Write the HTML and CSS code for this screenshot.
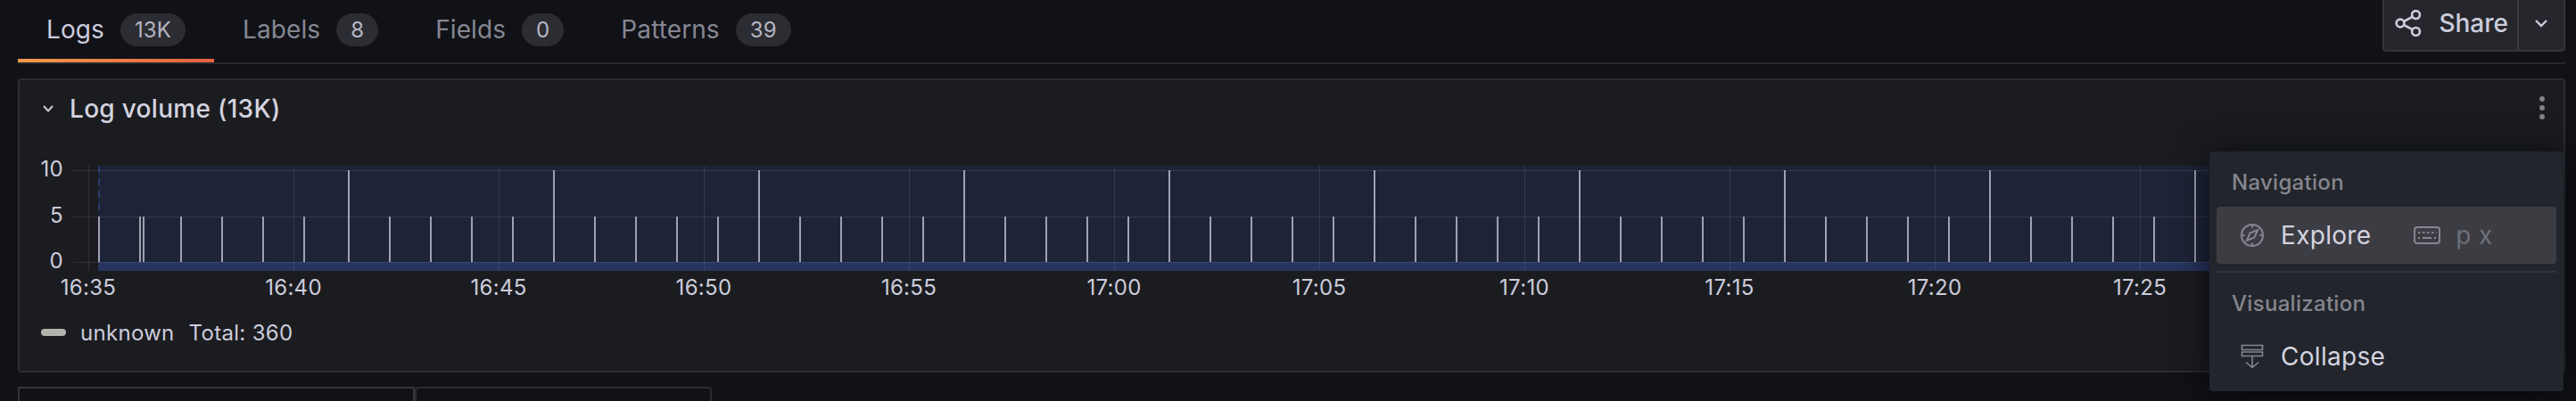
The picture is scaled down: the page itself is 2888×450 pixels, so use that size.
FILE: index.html
```html
<!DOCTYPE html>
<html lang="en">
<head>
  <meta charset="UTF-8" />
  <title>Logs</title>
  <link rel="stylesheet" href="styles.css">
</head>
<body>
  <div class="tabs">
    <div class="tab active">Logs <span class="badge">13K</span></div>
    <div class="tab">Labels <span class="badge">8</span></div>
    <div class="tab">Fields <span class="badge">0</span></div>
    <div class="tab">Patterns <span class="badge">39</span></div>
    <div class="share">
      <div class="share-main">
        <svg class="share-icon" viewBox="0 0 30 30">
          <circle cx="6" cy="15" r="4.4" />
          <circle cx="23.5" cy="5.6" r="4.4" />
          <circle cx="23.5" cy="24.4" r="4.4" />
          <path d="M10 13 19.6 7.8M10 17 19.6 22.2" />
        </svg>
        <span>Share</span>
      </div>
      <div class="share-more">
        <svg class="chevron-big" viewBox="0 0 16 10"><path d="M2 2 8 8 14 2" /></svg>
      </div>
    </div>
  </div>

  <div class="panel">
    <div class="panel-header">
      <svg class="chevron-small" viewBox="0 0 14 10"><path d="M2 2 7 7.5 12 2" /></svg>
      <span class="panel-title">Log volume (13K)</span>
      <svg class="dots" viewBox="0 0 8 30">
        <circle cx="4" cy="4" r="2.9" />
        <circle cx="4" cy="14" r="2.9" />
        <circle cx="4" cy="24" r="2.9" />
      </svg>
    </div>

    <svg class="chart" viewBox="22 154 2852 186">
      <rect class="plot-bg" x="110" y="186" width="2750" height="118" />
      <rect class="plot-band" x="110" y="294" width="2750" height="10" />
      <path class="plot-start" d="M111 186V243" />
      <path class="grid" d="M82 191H2860M82 243H2860M82 294H2860" />
      <path class="grid" d="M99 186V303M329 186V303M559 186V303M789 186V303M1019 186V303M1249 186V303M1479 186V303M1709 186V303M1939 186V303M2169 186V303M2399 186V303M2629 186V303" />
      <path class="bars" d="M111 243V294M157 243V294M161 243V294M203 243V294M249 243V294M295 243V294M341 243V294
        M437 243V294M483 243V294M529 243V294M575 243V294M667 243V294M713 243V294M759 243V294M805 243V294
        M897 243V294M943 243V294M989 243V294M1035 243V294M1127 243V294M1173 243V294M1219 243V294M1265 243V294
        M1357 243V294M1403 243V294M1449 243V294M1495 243V294M1587 243V294M1633 243V294M1679 243V294M1725 243V294
        M1817 243V294M1863 243V294M1909 243V294M1955 243V294M2047 243V294M2093 243V294M2139 243V294M2185 243V294
        M2277 243V294M2323 243V294M2369 243V294M2415 243V294" />
      <path class="bars" d="M391 191V294M621 191V294M851 191V294M1081 191V294M1311 191V294M1541 191V294M1771 191V294M2001 191V294M2231 191V294M2461 191V294" />
      <text class="y-label" x="71" y="198">10</text>
      <text class="y-label" x="71" y="250">5</text>
      <text class="y-label" x="71" y="301">0</text>
      <text class="x-label" x="99" y="331">16:35</text>
      <text class="x-label" x="329" y="331">16:40</text>
      <text class="x-label" x="559" y="331">16:45</text>
      <text class="x-label" x="789" y="331">16:50</text>
      <text class="x-label" x="1019" y="331">16:55</text>
      <text class="x-label" x="1249" y="331">17:00</text>
      <text class="x-label" x="1479" y="331">17:05</text>
      <text class="x-label" x="1709" y="331">17:10</text>
      <text class="x-label" x="1939" y="331">17:15</text>
      <text class="x-label" x="2169" y="331">17:20</text>
      <text class="x-label" x="2399" y="331">17:25</text>
    </svg>

    <div class="legend">
      <span class="legend-swatch"></span>
      <span>unknown</span>
      <span>Total: 360</span>
    </div>
  </div>

  <div class="subtabs">
    <div class="subtab first"></div>
    <div class="subtab second"></div>
  </div>

  <div class="menu">
    <div class="menu-label">Navigation</div>
    <div class="menu-item focused">
      <svg class="menu-icon" viewBox="0 0 28 28">
        <circle cx="14" cy="14" r="12" />
        <path d="M14 2V5.5M14 22.5V26M2 14H5.5M22.5 14H26" />
        <path d="M20 8 16.5 16.5 8 20 11.5 11.5Z" />
      </svg>
      <span class="menu-text">Explore</span>
      <span class="shortcut">
        <svg class="key-icon" viewBox="0 0 30 20">
          <rect x="1" y="1" width="28" height="18" rx="3" />
          <path class="key-dots" d="M5 7H7.5M10 7H12.5M15 7H17.5M20 7H22.5M25 7H25.5M5 13H7M10 13H20M23 13H25" />
        </svg>
        <span>p x</span>
      </span>
    </div>
    <div class="menu-divider"></div>
    <div class="menu-label">Visualization</div>
    <div class="menu-item">
      <svg class="menu-icon" viewBox="0 0 28 28">
        <path class="collapse-lines" d="M2.5 1.5H25.5V6.5H2.5ZM2.5 9H25.5V13.5H2.5ZM14 13.5V26.5M7 20.5 14 26.5 21 20.5" />
      </svg>
      <span class="menu-text">Collapse</span>
    </div>
  </div>
</body>
</html>
```

FILE: styles.css
```css
* {
  box-sizing: border-box;
}

body {
  margin: 0;
  padding: 0 12px 0 20px;
  height: 450px;
  overflow: hidden;
  position: relative;
  background-color: #111217;
  color: #ccccdc;
  font-family: 'Inter', 'Noto Sans', sans-serif;
  font-size: 28px;
  letter-spacing: 0.3px;
}

svg {
  display: block;
  fill: none;
}

.tabs {
  display: flex;
  height: 72px;
  border-bottom: 2px solid #26282d;
  letter-spacing: 0.1px;
}

.tab {
  display: flex;
  align-items: center;
  gap: 18px;
  height: 70px;
  padding: 0 32px 4px;
  color: rgba(204, 204, 220, 0.65);
}

.tab.active {
  color: #ccccdc;
  border-bottom: 4px solid;
  border-image: linear-gradient(90deg, #f2994a, #e5603f) 1;
  padding-bottom: 0;
}

.badge {
  display: flex;
  align-items: center;
  justify-content: center;
  height: 37px;
  padding: 0 16px;
  border-radius: 19px;
  background: #2c2d33;
  font-size: 24px;
  color: #b4b5c2;
}

.share {
  display: flex;
  margin-left: auto;
  height: 58px;
  background: #26272d;
  border: 2px solid #33353b;
  border-top: none;
  border-radius: 0 0 4px 4px;
  color: #ccccdc;
  font-weight: 500;
  letter-spacing: 0;
}

.share-main {
  display: flex;
  align-items: center;
  gap: 19px;
  padding: 0 10px 5px 12px;
  border-right: 2px solid #3a3c42;
}

.share-icon {
  width: 30px;
  height: 30px;
  stroke: #ccccdc;
  stroke-width: 2.6;
}

.share-more {
  display: flex;
  align-items: center;
  justify-content: center;
  width: 50px;
  padding-bottom: 5px;
}

.chevron-big {
  width: 16px;
  height: 10px;
  stroke: #ccccdc;
  stroke-width: 2.4;
}

.panel {
  margin-top: 16px;
  height: 330px;
  background: #1b1c20;
  border: 2px solid #2b2d32;
  border-radius: 4px;
}

.panel-header {
  display: flex;
  align-items: center;
  height: 64px;
  padding: 0 20px 0 25px;
}

.chevron-small {
  width: 14px;
  height: 10px;
  stroke: #ccccdc;
  stroke-width: 2;
}

.panel-title {
  margin-left: 17px;
  font-weight: 500;
  color: #d3d3df;
}

.dots {
  margin-left: auto;
  width: 8px;
  height: 30px;
  fill: #82838d;
}

.chart {
  width: 2852px;
  height: 186px;
}

.plot-bg {
  fill: #1e2438;
}

.plot-band {
  fill: #28345f;
}

.plot-start {
  stroke: #2c3a6b;
  stroke-width: 2;
  stroke-dasharray: 8 6;
}

.grid {
  stroke: rgba(204, 204, 220, 0.12);
  stroke-width: 1;
  shape-rendering: crispEdges;
}

.bars {
  stroke: #9fa1af;
  stroke-width: 2;
  shape-rendering: crispEdges;
}

.y-label,
.x-label {
  fill: #ccccdc;
  font-size: 24px;
}

.y-label {
  text-anchor: end;
}

.x-label {
  text-anchor: middle;
}

.legend {
  display: flex;
  align-items: center;
  height: 30px;
  margin-top: 18px;
  padding-left: 24px;
  font-size: 24px;
  gap: 16px;
}

.legend-swatch {
  width: 28px;
  height: 8px;
  border-radius: 4px;
  background: #b2b3ac;
}

.subtabs {
  display: flex;
  margin-top: 16px;
}

.subtab {
  height: 16px;
  border: 2px solid #2b2d32;
  border-bottom: none;
}

.subtab.first {
  width: 445px;
  border-color: #33353b;
}

.subtab.second {
  width: 333px;
  border-radius: 4px 4px 0 0;
}

.menu {
  position: absolute;
  top: 170px;
  left: 2477px;
  width: 397px;
  height: 269px;
  padding: 8px;
  background: #22252b;
  border-radius: 4px;
  box-shadow: 0 4px 40px rgba(1, 4, 9, 0.75);
}

.menu-label {
  display: flex;
  align-items: center;
  height: 52px;
  margin-bottom: 2px;
  padding-left: 17px;
  font-size: 24px;
  font-weight: 500;
  color: #85868f;
}

.menu-item {
  display: flex;
  align-items: center;
  height: 64px;
  padding-left: 26px;
  border-radius: 4px;
}

.menu-item.focused {
  background: #3c3d43;
}

.menu-icon {
  width: 28px;
  height: 28px;
  stroke: #85868f;
  stroke-width: 2;
}

.collapse-lines {
  stroke-width: 1.6;
}

.menu-text {
  margin-left: 18px;
  color: #d4d4e0;
}

.shortcut {
  display: flex;
  align-items: center;
  gap: 17px;
  margin-left: 48px;
  color: #6f7079;
}

.key-icon {
  width: 30px;
  height: 20px;
  stroke: #85868f;
  stroke-width: 2;
}

.key-dots {
  stroke-width: 1.8;
}

.menu-divider {
  height: 2px;
  margin: 8px 0;
  background: #33353b;
}
```
